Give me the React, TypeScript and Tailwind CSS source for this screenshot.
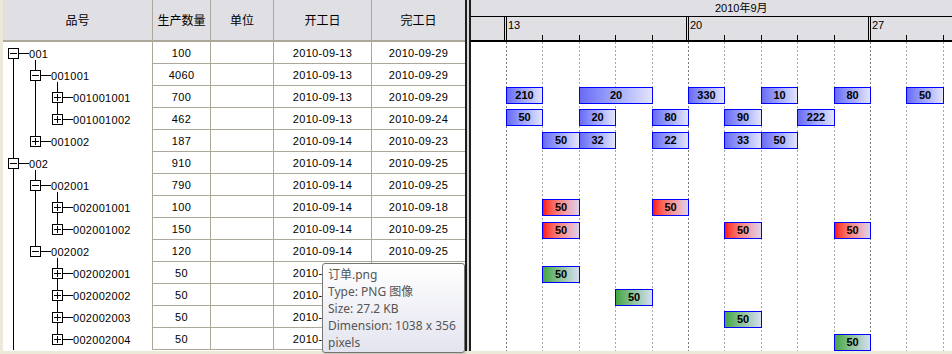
import React from "react";

type Row = {
  id: string;
  lv: number;
  open: boolean;
  last: boolean;
  anc: boolean[];
  qty: string;
  start: string;
  end: string;
};

const rows: Row[] = [
  { id: "001", lv: 0, open: true, last: false, anc: [], qty: "100", start: "2010-09-13", end: "2010-09-29" },
  { id: "001001", lv: 1, open: true, last: false, anc: [false], qty: "4060", start: "2010-09-13", end: "2010-09-29" },
  { id: "001001001", lv: 2, open: false, last: false, anc: [false, false], qty: "700", start: "2010-09-13", end: "2010-09-29" },
  { id: "001001002", lv: 2, open: false, last: true, anc: [false, false], qty: "462", start: "2010-09-13", end: "2010-09-24" },
  { id: "001002", lv: 1, open: false, last: true, anc: [false], qty: "187", start: "2010-09-14", end: "2010-09-23" },
  { id: "002", lv: 0, open: true, last: false, anc: [], qty: "910", start: "2010-09-14", end: "2010-09-25" },
  { id: "002001", lv: 1, open: true, last: false, anc: [false], qty: "790", start: "2010-09-14", end: "2010-09-25" },
  { id: "002001001", lv: 2, open: false, last: false, anc: [false, false], qty: "100", start: "2010-09-14", end: "2010-09-18" },
  { id: "002001002", lv: 2, open: false, last: true, anc: [false, false], qty: "150", start: "2010-09-14", end: "2010-09-25" },
  { id: "002002", lv: 1, open: true, last: true, anc: [false], qty: "120", start: "2010-09-14", end: "2010-09-25" },
  { id: "002002001", lv: 2, open: false, last: false, anc: [false, true], qty: "50", start: "2010-09-14", end: "2010-09-15" },
  { id: "002002002", lv: 2, open: false, last: false, anc: [false, true], qty: "50", start: "2010-09-16", end: "2010-09-17" },
  { id: "002002003", lv: 2, open: false, last: false, anc: [false, true], qty: "50", start: "2010-09-20", end: "2010-09-21" },
  { id: "002002004", lv: 2, open: false, last: true, anc: [false, true], qty: "50", start: "2010-09-23", end: "2010-09-24" },
];

type Bar = { k: number; n: number; v: string; c: "b" | "r" | "g" };

const bars: Bar[][] = [
  [],
  [],
  [
    { k: 0, n: 1, v: "210", c: "b" },
    { k: 2, n: 2, v: "20", c: "b" },
    { k: 5, n: 1, v: "330", c: "b" },
    { k: 7, n: 1, v: "10", c: "b" },
    { k: 9, n: 1, v: "80", c: "b" },
    { k: 11, n: 1, v: "50", c: "b" },
  ],
  [
    { k: 0, n: 1, v: "50", c: "b" },
    { k: 2, n: 1, v: "20", c: "b" },
    { k: 4, n: 1, v: "80", c: "b" },
    { k: 6, n: 1, v: "90", c: "b" },
    { k: 8, n: 1, v: "222", c: "b" },
  ],
  [
    { k: 1, n: 1, v: "50", c: "b" },
    { k: 2, n: 1, v: "32", c: "b" },
    { k: 4, n: 1, v: "22", c: "b" },
    { k: 6, n: 1, v: "33", c: "b" },
    { k: 7, n: 1, v: "50", c: "b" },
  ],
  [],
  [],
  [
    { k: 1, n: 1, v: "50", c: "r" },
    { k: 4, n: 1, v: "50", c: "r" },
  ],
  [
    { k: 1, n: 1, v: "50", c: "r" },
    { k: 6, n: 1, v: "50", c: "r" },
    { k: 9, n: 1, v: "50", c: "r" },
  ],
  [],
  [{ k: 1, n: 1, v: "50", c: "g" }],
  [{ k: 3, n: 1, v: "50", c: "g" }],
  [{ k: 6, n: 1, v: "50", c: "g" }],
  [{ k: 9, n: 1, v: "50", c: "g" }],
];

const barColor = {
  b: "bg-linear-to-r from-[#6a6af5] to-[#e4e4fa]",
  r: "bg-linear-to-r from-[#ff0000] to-[#dcd2ee]",
  g: "bg-linear-to-r from-[#40a640] to-[#d6def2]",
};

// day grid of the gantt, in panel coordinates
const DAY = 36.4;
const X0 = 34;
const L = (k: number) => Math.round(X0 + DAY * k) + 1;
const DAYS = [0, 1, 2, 3, 4, 5, 6, 7, 8, 9, 10, 11, 12];
const WEEKS = [
  { k: 0, label: "13" },
  { k: 5, label: "20" },
  { k: 10, label: "27" },
];

const indent: Record<number, string> = { 0: "pl-[5px]", 1: "pl-[27px]", 2: "pl-[49px]" };

function ExpandBox({ open }: { open: boolean }) {
  return (
    <svg width="11" height="11" viewBox="0 0 11 11" className="shrink-0">
      <rect x="0.5" y="0.5" width="10" height="10" fill="#fff" stroke="#000" />
      <line x1="2" y1="5.5" x2="9" y2="5.5" stroke="#000" />
      {!open && <line x1="5.5" y1="2" x2="5.5" y2="9" stroke="#000" />}
    </svg>
  );
}

function TreeCell({ row, index }: { row: Row; index: number }) {
  const x = (l: number) => 10.5 + 22 * l;
  const segs: [number, number, number][] = [];
  row.anc.forEach((last, a) => {
    if (!last) segs.push([x(a), 0, 22]);
  });
  if (index > 0) segs.push([x(row.lv), 0, 6]);
  if (!row.last) segs.push([x(row.lv), 17, 22]);
  if (row.open) segs.push([x(row.lv + 1), 18, 22]);

  return (
    <div className="relative h-[22px] w-[150px] shrink-0 border-r border-[#aca899]">
      <svg width="149" height="22" className="absolute left-0 top-0">
        {segs.map(([sx, y1, y2], i) => (
          <line key={i} x1={sx} x2={sx} y1={y1} y2={y2} stroke="#000" />
        ))}
      </svg>
      <div className={`relative flex items-start pt-[6px] ${indent[row.lv]}`}>
        <ExpandBox open={row.open} />
        <div className="mt-[5px] h-px w-[10px] bg-black" />
        <span className="mt-[1px] text-[11px] leading-[11px] tracking-[0.3px]">{row.id}</span>
      </div>
    </div>
  );
}

function LeftTable() {
  const cell = "h-[22px] shrink-0 border-r border-b border-[#aca899] pt-[2px] text-center text-[11px] leading-[19px] tracking-[0.3px]";
  const head = "flex shrink-0 items-center justify-center border-r border-[#aca899] font-['Noto_Sans_CJK_SC',sans-serif] text-[12px]";
  return (
    <div className="flex w-[462px] shrink-0 flex-col overflow-hidden">
      <div className="flex h-[42px] shrink-0 border-b-2 border-[#aca899] bg-[#e0dfe3]">
        <div className={`${head} w-[150px]`}>品号</div>
        <div className={`${head} w-[58px]`}>生产数量</div>
        <div className={`${head} w-[63px]`}>单位</div>
        <div className={`${head} w-[98px]`}>开工日</div>
        <div className={`${head} w-[93px] border-r-0`}>完工日</div>
      </div>
      <div className="flex flex-col bg-white">
        {rows.map((r, i) => (
          <div key={r.id} className="flex">
            <TreeCell row={r} index={i} />
            <div className={`${cell} w-[58px]`}>{r.qty}</div>
            <div className={`${cell} w-[63px]`} />
            <div className={`${cell} w-[98px]`}>{r.start}</div>
            <div className={`${cell} w-[93px] border-r-0`}>{r.end}</div>
          </div>
        ))}
      </div>
    </div>
  );
}

function Splitter() {
  return (
    <div className="flex w-[6px] shrink-0">
      <div className="w-[2px] bg-[#1e1e1e]" />
      <div className="w-[2px] bg-[#d8d7dc]" />
      <div className="w-[2px] bg-[#1e1e1e]" />
    </div>
  );
}

function Gantt() {
  return (
    <div className="flex min-w-0 flex-1 flex-col overflow-hidden">
      <div className="h-[17px] shrink-0 border-b border-black bg-[#e0dfe3] pl-[244px] text-[11px] leading-[16px]">
        2010年9月
      </div>
      <div className="relative h-[25px] shrink-0 border-b-2 border-black bg-[#e0dfe3]">
        <svg className="absolute left-0 top-0" width="481" height="23">
          {DAYS.map((k) =>
            k % 5 === 0 ? (
              <g key={k}>
                <line x1={L(k) - 1.5} x2={L(k) - 1.5} y1="0" y2="23" stroke="#000" />
                <line x1={L(k) + 0.5} x2={L(k) + 0.5} y1="0" y2="23" stroke="#000" />
              </g>
            ) : (
              <line key={k} x1={L(k) + 0.5} x2={L(k) + 0.5} y1="18" y2="23" stroke="#000" />
            )
          )}
        </svg>
        {WEEKS.map((w) => (
          <span
            key={w.k}
            className="absolute top-[2px] text-[11px] leading-[13px]"
            style={{ left: L(w.k) + 2 }}
          >
            {w.label}
          </span>
        ))}
      </div>
      <div className="relative flex-1 bg-white">
        <svg className="absolute left-0 top-0" width="481" height="320">
          {DAYS.map((k) => (
            <line
              key={k}
              x1={L(k) + 0.5}
              x2={L(k) + 0.5}
              y1="0"
              y2="320"
              stroke={k % 5 === 0 ? "#7a7a7a" : "#a6a6a6"}
              strokeDasharray="2 2"
            />
          ))}
        </svg>
        {bars.map((list, i) => (
          <div key={i} className="relative h-[22.45px]">
            {list.map((b) => (
              <div
                key={b.k}
                className={`absolute top-0 flex h-[17px] items-center justify-center border border-[#0000ff] text-[11px] font-bold leading-[13px] text-black ${barColor[b.c]}`}
                style={{ left: L(b.k), width: L(b.k + b.n) - L(b.k) + 1 }}
              >
                {b.v}
              </div>
            ))}
          </div>
        ))}
      </div>
    </div>
  );
}

function Tooltip() {
  return (
    <div className="absolute left-[322px] top-[263px] h-[90px] w-[143px] rounded-[3px] border border-[#767676] bg-linear-to-b from-white to-[#e3e4ef] px-[5px] pt-[2px] font-['Noto_Sans','Noto_Sans_CJK_SC',sans-serif] text-[12px] leading-[17px] text-[#555] shadow-[1px_1px_2px_rgba(0,0,0,0.2)]">
      <div>订单.png</div>
      <div>Type: PNG 图像</div>
      <div>Size: 27.2 KB</div>
      <div>Dimension: 1038 x 356</div>
      <div>pixels</div>
    </div>
  );
}

export default function App() {
  return (
    <div className="relative h-[354px] w-[952px] overflow-hidden bg-[#ece9d8] pb-[3px] pl-[3px] font-['Liberation_Sans','Noto_Sans_CJK_SC',sans-serif] text-black">
      <div className="flex h-[351px] bg-white">
        <LeftTable />
        <Splitter />
        <Gantt />
      </div>
      <Tooltip />
    </div>
  );
}
